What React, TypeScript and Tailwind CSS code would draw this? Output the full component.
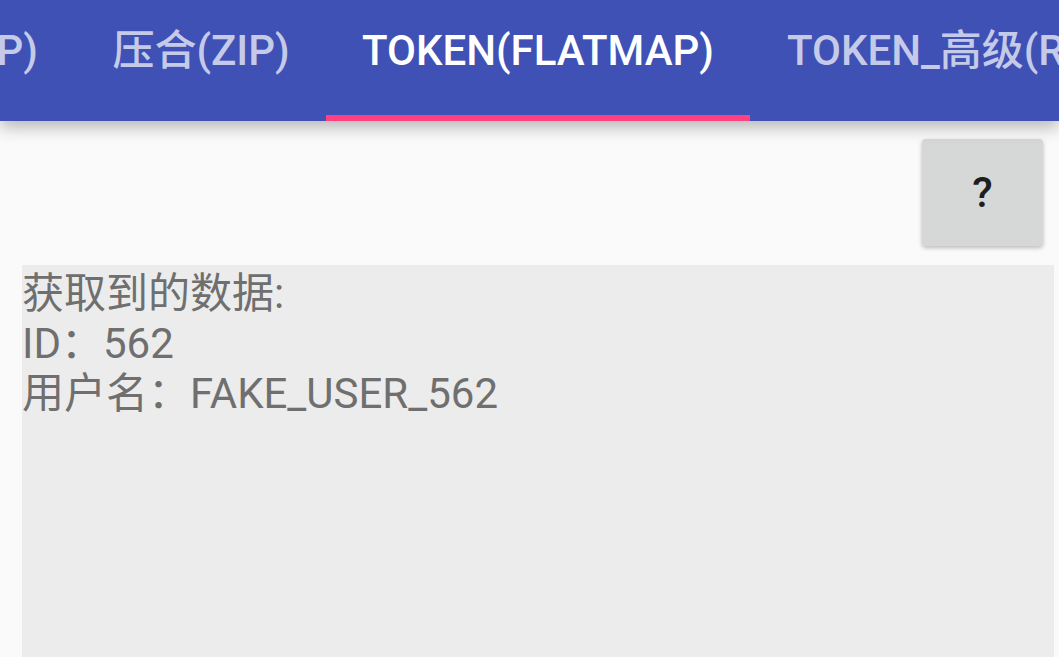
import React from "react";

const font = { fontFamily: "Roboto, 'Noto Sans CJK SC', sans-serif" };

export default function App() {
  return (
    <div className="w-[1059px] h-[657px] overflow-hidden bg-[#fafafa] relative" style={font}>
      <div className="relative z-10 h-[121px] bg-[#3f51b5] overflow-hidden shadow-[0_6px_16px_rgba(0,0,0,0.28)]">
        <div className="flex h-full ml-[-174px] whitespace-nowrap">
          <div className="w-[250px] shrink-0 flex items-center justify-end pr-[38px] pb-[20px] text-[42px] font-medium text-[#c5cae9]">
            变换(MAP)
          </div>
          <div className="w-[250px] shrink-0 flex items-center justify-center pb-[20px] text-[42px] font-medium text-[#c5cae9]">
            压合(ZIP)
          </div>
          <div className="relative w-[424px] shrink-0 flex items-center justify-center pb-[20px] text-[42px] font-medium text-white">
            TOKEN(FLATMAP)
            <div className="absolute left-0 right-0 bottom-0 h-[6px] bg-[#ff4081]" />
          </div>
          <div className="shrink-0 flex items-center pl-[37px] pb-[20px] text-[42px] font-medium text-[#c5cae9]">
            TOKEN_高级(RETRYWHEN)
          </div>
        </div>
      </div>
      <div className="flex justify-end pt-[18px] pr-[16px]">
        <button className="w-[121px] h-[107px] rounded-[4px] bg-[#d6d7d7] shadow-[0_2px_4px_rgba(0,0,0,0.25)] flex items-center justify-center text-[42px] font-medium text-[#1e1e1e]">
          ?
        </button>
      </div>
      <div className="ml-[22px] mr-[5px] mt-[19px] h-[400px] bg-[#ececec] pt-[4px] text-[42px] leading-[50px] text-[#6f6f6f]">
        <div>获取到的数据:</div>
        <div>ID：562</div>
        <div>用户名：FAKE_USER_562</div>
      </div>
    </div>
  );
}
